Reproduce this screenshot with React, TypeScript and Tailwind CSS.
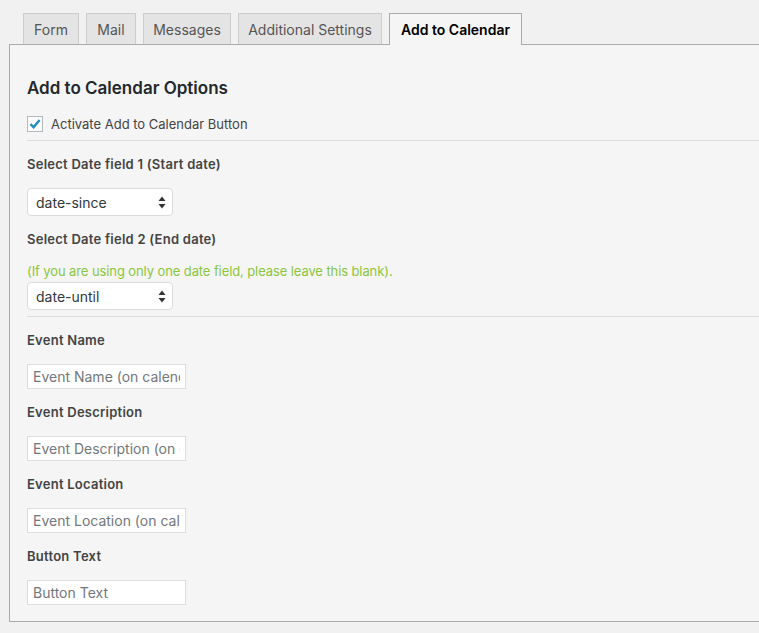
const tabs = [
  { label: 'Form', w: 'w-[56px]' },
  { label: 'Mail', w: 'w-[50px]' },
  { label: 'Messages', w: 'w-[88px]' },
  { label: 'Additional Settings', w: 'w-[144px]' },
];

const font = { fontFamily: 'Inter, "Noto Sans", sans-serif' };

function Select({ value }: { value: string }) {
  return (
    <div className="flex h-[28px] w-[146px] items-center justify-between rounded-[4px] border border-[#dcdcdc] bg-white pl-[8px] pr-[6px] text-[14px] text-[#32373c]">
      <span>{value}</span>
      <svg width="8" height="13" viewBox="0 0 8 13">
        <path d="M4 0.5 L7.5 5 H0.5 Z" fill="#333" />
        <path d="M4 12.5 L7.5 8 H0.5 Z" fill="#333" />
      </svg>
    </div>
  );
}

function Label({ children, className = '' }: { children: string; className?: string }) {
  return (
    <div className={`h-[18px] text-[13px] font-semibold leading-[18px] tracking-[0.25px] text-[#444] ${className}`}>
      {children}
    </div>
  );
}

function Field({ label, placeholder }: { label: string; placeholder: string }) {
  return (
    <div className="flex flex-col">
      <Label className="mt-[14px]">{label}</Label>
      <input
        className="mt-[15px] h-[25px] w-[159px] border border-[#dddddd] bg-white px-[5px] text-[14px] text-[#32373c] outline-none placeholder:text-[#72777c]"
        placeholder={placeholder}
        style={font}
      />
    </div>
  );
}

export default function App() {
  return (
    <div className="h-[633px] w-[759px] overflow-hidden bg-[#f1f1f1] pl-[9px] pt-[13px]" style={font}>
      <div className="relative z-10 flex gap-[7px] pl-[14px]">
        {tabs.map((t) => (
          <div
            key={t.label}
            className={`flex h-[31px] items-center justify-center whitespace-nowrap border border-b-0 border-[#cccccc] bg-[#e4e4e4] text-[14px] text-[#555] ${t.w}`}
          >
            {t.label}
          </div>
        ))}
        <div className="-mb-px flex h-[32px] w-[133px] items-center justify-center whitespace-nowrap border border-b-0 border-[#aaaaaa] bg-[#f5f5f5] pb-px text-[14px] font-semibold text-black">
          Add to Calendar
        </div>
      </div>
      <div className="w-[770px] border border-[#aaaaaa] bg-[#f5f5f5] pb-[16px] pl-[17px] pt-[31px]">
        <h2 className="h-[24px] text-[17px] font-semibold leading-[24px] text-[#23282d]">Add to Calendar Options</h2>
        <label className="mt-[16px] flex h-[16px] items-center gap-[8px] text-[13px] leading-[16px] text-[#444]">
          <span className="flex h-[16px] w-[16px] items-center justify-center border border-[#b4b9be] bg-white">
            <svg width="14" height="14" viewBox="0 0 14 14">
              <path d="M2.5 7.2 L5.6 10.3 L11.6 3" fill="none" stroke="#1e8cbe" strokeWidth="2.4" />
            </svg>
          </span>
          Activate Add to Calendar Button
        </label>
        <div className="mt-[8px] h-px bg-[#dddddd]" />
        <Label className="mt-[14px]">Select Date field 1 (Start date)</Label>
        <div className="mt-[15px]">
          <Select value="date-since" />
        </div>
        <Label className="mt-[14px]">Select Date field 2 (End date)</Label>
        <div className="mt-[14px] h-[18px] text-[13px] leading-[18px] tracking-[-0.1px] text-[#8bc53f]">
          (If you are using only one date field, please leave this blank).
        </div>
        <div className="mt-[2px]">
          <Select value="date-until" />
        </div>
        <div className="mt-[6px] h-px bg-[#dddddd]" />
        <Field label="Event Name" placeholder="Event Name (on calendar)" />
        <Field label="Event Description" placeholder="Event Description (on calendar)" />
        <Field label="Event Location" placeholder="Event Location (on calendar)" />
        <Field label="Button Text" placeholder="Button Text" />
      </div>
    </div>
  );
}
